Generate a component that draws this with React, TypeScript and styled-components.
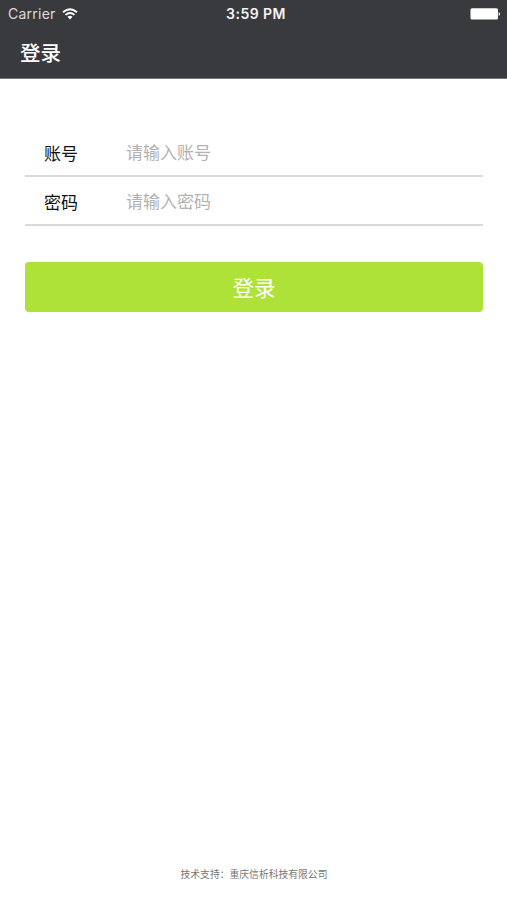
import React from "react";
import styled, { createGlobalStyle } from "styled-components";

const GlobalStyle = createGlobalStyle`
  * { box-sizing: border-box; }
  body { margin: 0; background: #fff; font-family: "Noto Sans CJK SC", sans-serif; }
`;

const Screen = styled.main`
  height: 900px;
  display: flex;
  flex-direction: column;
  background: #fff;
`;

const Header = styled.header`
  height: 79px;
  background: #393a3e;
  color: #fff;
  border-bottom: 1px solid #77787b;
`;

const StatusBar = styled.div`
  height: 27px;
  padding: 0 6px 0 8px;
  display: grid;
  grid-template-columns: 1fr auto 1fr;
  align-items: center;
  font-family: Inter, sans-serif;
  font-size: 14px;
  line-height: 27px;
`;

const Carrier = styled.div`
  display: flex;
  align-items: center;
  gap: 6px;
  color: #dcdcdd;
  letter-spacing: 0.25px;
`;

const Clock = styled.div`
  padding-left: 3px;
  color: #f4f4f4;
  font-weight: 600;
  letter-spacing: 0.45px;
`;

const BatterySlot = styled.div`
  display: flex;
  justify-content: flex-end;
`;

const Title = styled.h1`
  margin: 0;
  padding-left: 20px;
  font-size: 20.5px;
  line-height: 50px;
  font-weight: 500;
`;

const Form = styled.form`
  padding: 49px 24px 0 25px;
`;

const Field = styled.label`
  height: 49px;
  display: flex;
  align-items: center;
  padding-left: 19px;
  border-bottom: 2px solid #d9d9d9;
  font-size: 17px;
`;

const FieldName = styled.span`
  width: 82px;
  padding-top: 2px;
  color: #111;
`;

const Input = styled.input`
  flex: 1;
  min-width: 0;
  padding: 0;
  border: 0;
  outline: 0;
  background: transparent;
  font: inherit;
  &::placeholder { color: #b2b2b2; opacity: 1; }
`;

const Submit = styled.button`
  display: block;
  width: 100%;
  height: 50px;
  margin-top: 36px;
  padding: 0;
  border: 0;
  border-radius: 4px;
  background: #aee238;
  color: #fff;
  font: 400 21.5px/50px "Noto Sans CJK SC", sans-serif;
`;

const Footer = styled.footer`
  margin-top: auto;
  padding: 0 0 18px 1px;
  text-align: center;
  color: #777;
  font-size: 9.8px;
  line-height: 16px;
`;

export default function App() {
  return (
    <Screen>
      <GlobalStyle />
      <Header>
        <StatusBar>
          <Carrier>
            Carrier
            <svg width="16" height="12" viewBox="0 0 16 12" fill="none" stroke="#fff" strokeWidth="1.8">
              <path d="M1 4.2Q8-1.7 15 4.2" />
              <path d="M3.5 6.9Q8 3.1 12.5 6.9" />
              <path d="M8 11.5L5.5 8.7Q8 6.8 10.5 8.7Z" fill="#fff" stroke="none" />
            </svg>
          </Carrier>
          <Clock>3:59 PM</Clock>
          <BatterySlot>
            <svg width="31" height="12" viewBox="0 0 31 12" fill="#fff">
              <rect x="0.5" y="0.3" width="27.5" height="11.2" rx="1.5" />
              <path d="M28.7 4Q31.5 6 28.7 8Z" />
            </svg>
          </BatterySlot>
        </StatusBar>
        <Title>登录</Title>
      </Header>
      <Form>
        <Field><FieldName>账号</FieldName><Input placeholder="请输入账号" /></Field>
        <Field><FieldName>密码</FieldName><Input type="password" placeholder="请输入密码" /></Field>
        <Submit type="button">登录</Submit>
      </Form>
      <Footer>技术支持：重庆信析科技有限公司</Footer>
    </Screen>
  );
}
